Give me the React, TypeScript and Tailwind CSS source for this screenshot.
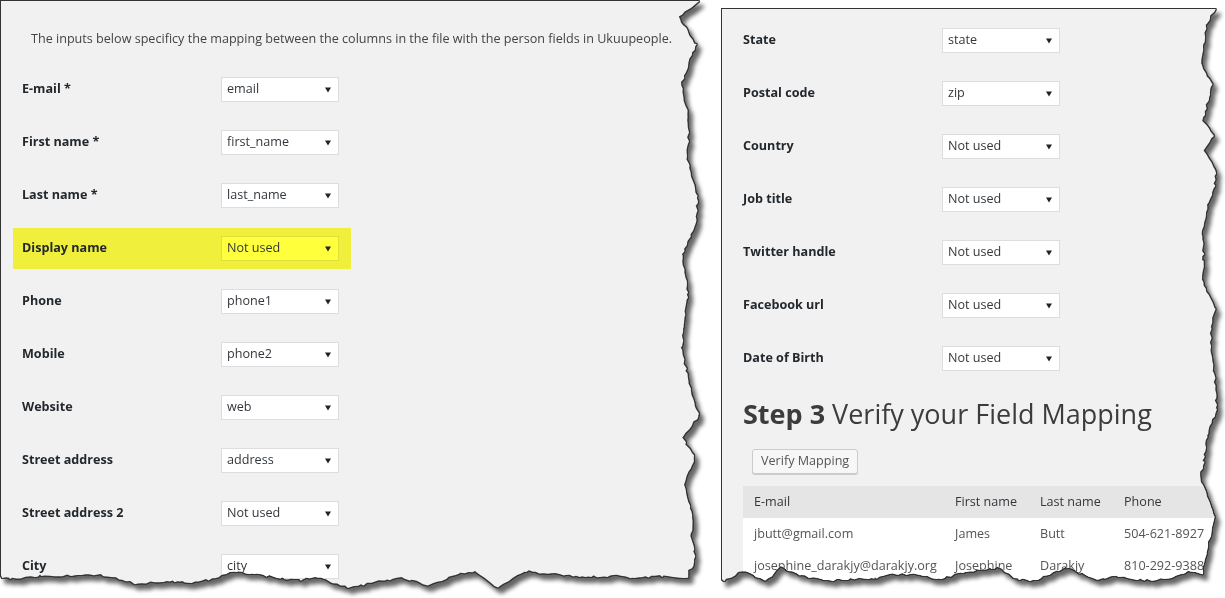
import { useMemo } from "react";

// Field mapping screenshot: two torn-off pieces of a WP admin page.
type Row = { label: string; value: string; hi?: boolean };

const LEFT_ROWS: Row[] = [
  { label: "E-mail *", value: "email" },
  { label: "First name *", value: "first_name" },
  { label: "Last name *", value: "last_name" },
  { label: "Display name", value: "Not used", hi: true },
  { label: "Phone", value: "phone1" },
  { label: "Mobile", value: "phone2" },
  { label: "Website", value: "web" },
  { label: "Street address", value: "address" },
  { label: "Street address 2", value: "Not used" },
  { label: "City", value: "city" },
];

const RIGHT_ROWS: Row[] = [
  { label: "State", value: "state" },
  { label: "Postal code", value: "zip" },
  { label: "Country", value: "Not used" },
  { label: "Job title", value: "Not used" },
  { label: "Twitter handle", value: "Not used" },
  { label: "Facebook url", value: "Not used" },
  { label: "Date of Birth", value: "Not used" },
];

const PEOPLE = [
  ["jbutt@gmail.com", "James", "Butt", "504-621-8927"],
  ["josephine_darakjy@darakjy.org", "Josephine", "Darakjy", "810-292-9388"],
];

function mulberry32(a: number) {
  return () => {
    a |= 0;
    a = (a + 0x6d2b79f5) | 0;
    let t = Math.imul(a ^ (a >>> 15), 1 | a);
    t = (t + Math.imul(t ^ (t >>> 7), 61 | t)) ^ t;
    return ((t ^ (t >>> 14)) >>> 0) / 4294967296;
  };
}

// offsets (inward from the outer edge) along an edge of given length
function tornEdge(len: number, depth: number, rnd: () => number) {
  const out: [number, number][] = [];
  let pos = 0;
  let prev = rnd() * depth;
  while (pos < len) {
    const span = 14 + rnd() * 26;
    const next = rnd() * depth;
    for (let s = 0; s < span && pos + s < len; s += 2 + rnd() * 3) {
      const t = s / span;
      const v = prev + (next - prev) * t + (rnd() - 0.5) * 2.4;
      out.push([pos + s, Math.max(0, Math.min(depth, v))]);
    }
    pos += span;
    prev = next;
  }
  out.push([len, prev]);
  return out;
}

function tornClip(w: number, h: number, dr: number, db: number, seed: number) {
  const rnd = mulberry32(seed);
  const pts: string[] = ["0px 0px"];
  const right = tornEdge(h - db, dr, rnd);
  right.forEach(([y, o]) => pts.push(`${(w - o).toFixed(1)}px ${y.toFixed(1)}px`));
  const startX = w - right[right.length - 1][1];
  const bottom = tornEdge(startX, db, rnd);
  bottom.forEach(([x, o]) =>
    pts.push(`${(startX - x).toFixed(1)}px ${(h - o).toFixed(1)}px`)
  );
  return `polygon(${pts.join(", ")})`;
}

function Select({ value, hi }: { value: string; hi?: boolean }) {
  return (
    <div
      className={
        "flex h-[25px] w-[118px] items-center justify-between border pl-[5px] pr-[7px] text-[12.6px] text-[#32373c] " +
        (hi ? "border-[#e0e03a] bg-[#ffff3c]" : "border-[#dddddd] bg-white")
      }
    >
      <span>{value}</span>
      <svg width="6" height="6" viewBox="0 0 6 6">
        <polygon points="0,0.5 6,0.5 3,5.5" fill="#222" />
      </svg>
    </div>
  );
}

function FieldRow({ row }: { row: Row }) {
  return (
    <div
      className={
        "mb-[12px] flex h-[41px] w-[338px] items-center pl-[9px] " +
        (row.hi ? "bg-[#f0f03c]" : "")
      }
    >
      <div className="w-[199px] text-[12.6px] font-bold text-[#23282d]">{row.label}</div>
      <Select value={row.value} hi={row.hi} />
    </div>
  );
}

const FRAME =
  "[filter:drop-shadow(1px_0_0_#333)_drop-shadow(0_1px_0_#333)_drop-shadow(-1px_0_0_#333)_drop-shadow(0_-1px_0_#333)_drop-shadow(4px_5px_2px_rgba(0,0,0,0.6))]";

export default function App() {
  const leftClip = useMemo(() => tornClip(699, 588, 22, 19, 7), []);
  const rightClip = useMemo(() => tornClip(495, 573, 18, 16, 23), []);

  return (
    <div className="flex h-[598px] w-[1225px] items-start overflow-hidden bg-white font-['Open_Sans',sans-serif]">
      <div className={"pl-px pt-px " + FRAME}>
        <div
          className="h-[588px] w-[699px] overflow-hidden bg-[#f1f1f1]"
          style={{ clipPath: leftClip }}
        >
          <p className="pl-[30px] pt-[29px] text-[12.6px] leading-[18px] text-[#444]">
            The inputs below specificy the mapping between the columns in the file with the person fields in Ukuupeople.
          </p>
          <div className="mt-[21px] pl-[12px]">
            {LEFT_ROWS.map((r) => (
              <FieldRow key={r.label} row={r} />
            ))}
          </div>
        </div>
      </div>

      <div className={"ml-[22px] pt-[9px] " + FRAME}>
        <div
          className="h-[573px] w-[495px] overflow-hidden bg-[#f1f1f1]"
          style={{ clipPath: rightClip }}
        >
          <div className="pl-[12px] pt-[11px]">
            {RIGHT_ROWS.map((r) => (
              <FieldRow key={r.label} row={r} />
            ))}
          </div>
          <div className="pl-[21px]">
            <h2 className="mt-[18px] whitespace-nowrap text-[27px] leading-[34px] text-[#3c3c3c]">
              <span className="font-bold">Step 3</span> Verify your Field Mapping
            </h2>
            <button className="ml-[9px] mt-[18px] h-[25px] rounded-[3px] border border-[#cccccc] bg-[#f7f7f7] px-[8px] text-[12.6px] text-[#555] shadow-[0_1px_0_#cccccc]">
              Verify Mapping
            </button>
            <table className="mt-[12px] w-[520px] border-collapse text-left text-[12.6px] text-[#32373c]">
              <thead>
                <tr className="h-[32px] bg-[#e5e5e5]">
                  <th className="w-[201px] pl-[11px] font-normal">E-mail</th>
                  <th className="w-[85px] pl-[11px] font-normal">First name</th>
                  <th className="w-[84px] pl-[11px] font-normal">Last name</th>
                  <th className="pl-[11px] font-normal">Phone</th>
                </tr>
              </thead>
              <tbody>
                {PEOPLE.map((p) => (
                  <tr key={p[0]} className="h-[32px] bg-white text-[#555]">
                    {p.map((c, i) => (
                      <td key={i} className="whitespace-nowrap pl-[11px]">
                        {c}
                      </td>
                    ))}
                  </tr>
                ))}
              </tbody>
            </table>
          </div>
        </div>
      </div>
    </div>
  );
}
